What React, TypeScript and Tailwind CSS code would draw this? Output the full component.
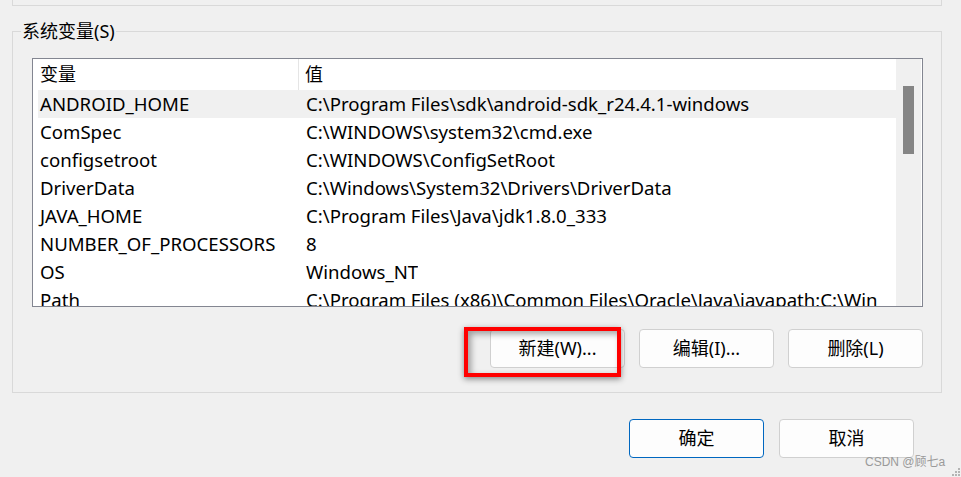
import React from "react";

const rows: [string, string][] = [
  ["ANDROID_HOME", "C:\\Program Files\\sdk\\android-sdk_r24.4.1-windows"],
  ["ComSpec", "C:\\WINDOWS\\system32\\cmd.exe"],
  ["configsetroot", "C:\\WINDOWS\\ConfigSetRoot"],
  ["DriverData", "C:\\Windows\\System32\\Drivers\\DriverData"],
  ["JAVA_HOME", "C:\\Program Files\\Java\\jdk1.8.0_333"],
  ["NUMBER_OF_PROCESSORS", "8"],
  ["OS", "Windows_NT"],
  ["Path", "C:\\Program Files (x86)\\Common Files\\Oracle\\Java\\javapath;C:\\Win"],
];

function Btn({ label, primary }: { label: string; primary?: boolean }) {
  return (
    <div
      className={
        "w-[135px] h-[39px] rounded-[4px] border bg-[#fdfdfd] flex items-center justify-center text-[18px] text-black " +
        (primary ? "border-[#0067c0]" : "border-[#d0d0d0]")
      }
    >
      {label}
    </div>
  );
}

export default function App() {
  return (
    <div className="w-[961px] h-[477px] bg-[#f0f0f0] relative overflow-hidden text-black font-['Noto_Sans','Noto_Sans_CJK_SC',sans-serif]">
      <div className="ml-[12px] w-[930px] h-[6px] border-x border-b border-[#d9d9d9]" />
      <fieldset className="ml-[12px] mt-[14px] w-[930px] border border-[#d9d9d9] pl-[19px] pr-[18px] pt-[16px] pb-[24px]">
        <legend className="-ml-[11px] px-[1px] text-[18px] leading-[22px]">系统变量(S)</legend>
        <div className="h-[249px] border border-[#838691] bg-white flex overflow-hidden">
          <div className="flex-1 overflow-hidden">
            <div className="h-[31px] flex items-center text-[18px]">
              <div className="w-[266px] h-full flex items-center pl-[7px] border-r border-[#e5e5e5]">变量</div>
              <div className="pl-[6px]">值</div>
            </div>
            {rows.map(([k, v], i) => (
              <div
                key={k}
                className={
                  "ml-[5px] h-[28px] flex items-center text-[18.6px] whitespace-nowrap " +
                  (i === 0 ? "bg-[#f0f0f0]" : "")
                }
              >
                <div className="w-[262px] pl-[2px] overflow-hidden">{k}</div>
                <div className="pl-[6px] overflow-hidden">{v}</div>
              </div>
            ))}
          </div>
          <div className="w-[26px] bg-[#f0f0f0] border-r border-white">
            <div className="mt-[27px] ml-[7px] w-[11px] h-[68px] bg-[#858585]" />
          </div>
        </div>
        <div className="mt-[22px] flex justify-end gap-[14px]">
          <Btn label="新建(W)..." />
          <Btn label="编辑(I)..." />
          <Btn label="删除(L)" />
        </div>
      </fieldset>
      <div className="mt-[26px] flex justify-end gap-[15px] pr-[47px]">
        <Btn label="确定" primary />
        <Btn label="取消" />
      </div>

      {/* annotation box */}
      <div className="absolute left-[464px] top-[327px] w-[157px] h-[50px] border-4 border-[#ff0000] shadow-[0_2px_6px_rgba(0,0,0,0.45),inset_3px_3px_6px_rgba(0,0,0,0.35)]" />

      {/* watermark */}
      <div className="absolute left-[865px] top-[452px] text-[12px] leading-[20px] text-[#9a9a9a] whitespace-nowrap font-['Liberation_Sans','Noto_Sans_CJK_SC',sans-serif]">
        CSDN @顾七a
      </div>

      {/* resize grip */}
      <svg className="absolute right-0 bottom-0" width="11" height="10" viewBox="0 0 11 10">
        {[
          [8, 1],
          [5, 4],
          [8, 4],
          [2, 7],
          [5, 7],
          [8, 7],
        ].map(([x, y], i) => (
          <rect key={i} x={x} y={y} width="2" height="2" fill="#b4b4b4" />
        ))}
      </svg>
    </div>
  );
}
